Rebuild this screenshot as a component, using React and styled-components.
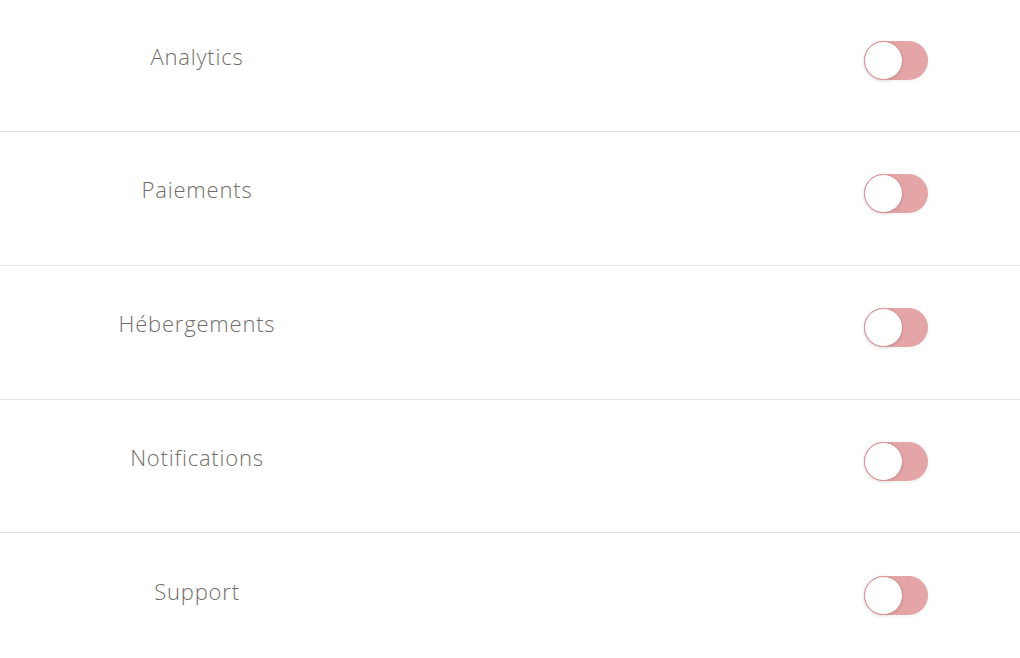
import { createGlobalStyle, styled } from "styled-components";

const GlobalStyle = createGlobalStyle`
  body {
    margin: 0;
    background: #ffffff;
    font-family: "Open Sans", "Liberation Sans", sans-serif;
  }
`;

const List = styled.div`
  display: flex;
  flex-direction: column;
  width: 1020px;
  margin-top: -1.3px;
`;

const Row = styled.div`
  display: grid;
  grid-template-columns: 394px 1fr;
  align-items: center;
  height: 133.67px;
  padding-bottom: 10px;
  box-sizing: border-box;
  border-bottom: ${(p) => (p.last ? "none" : "1px solid #e2e2e2")};
`;

const Label = styled.span`
  text-align: center;
  font-size: 22px;
  font-weight: 300;
  color: #736d6a;
  letter-spacing: 0.8px;
  margin-bottom: 9px;
`;

const Toggle = styled.div`
  justify-self: end;
  margin-right: 92px;
  width: 64px;
  height: 39px;
  border-radius: 20px;
  background: #e4a5a7;
  display: flex;
  align-items: center;
  box-shadow: 0 1px 4px rgba(0, 0, 0, 0.06);
`;

const Knob = styled.div`
  width: 37px;
  height: 37px;
  border-radius: 50%;
  background: #ffffff;
  border: 1px solid #d98f93;
  box-shadow: 0 1px 3px rgba(0, 0, 0, 0.12);
`;

const items = ["Analytics", "Paiements", "Hébergements", "Notifications", "Support"];

const App = () => {
  return (
    <>
      <GlobalStyle />
      <List>
        {items.map((label, i) => (
          <Row key={label} last={i === items.length - 1}>
            <Label>{label}</Label>
            <Toggle>
              <Knob />
            </Toggle>
          </Row>
        ))}
      </List>
    </>
  );
};

export default App;
